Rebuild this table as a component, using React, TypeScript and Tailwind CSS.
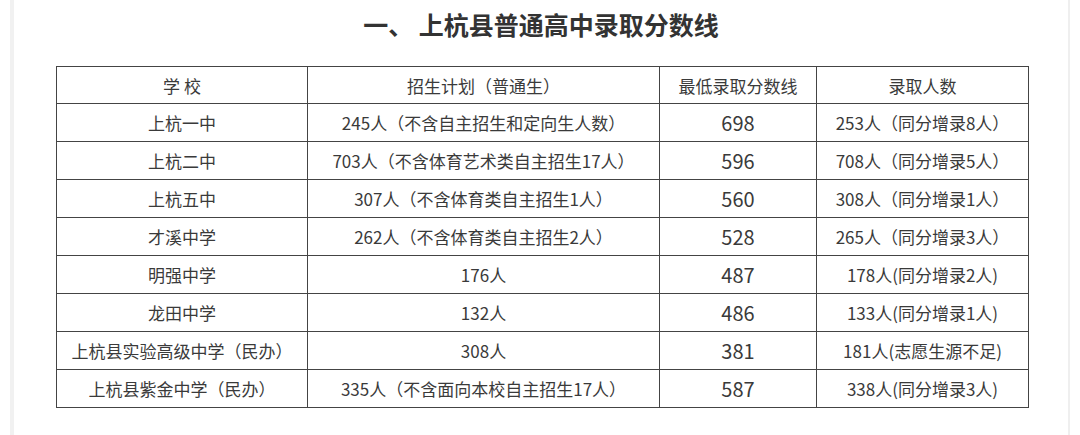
import React from "react";

const rows: [string, string, string, string][] = [
  ["上杭一中", "245人（不含自主招生和定向生人数）", "698", "253人（同分增录8人）"],
  ["上杭二中", "703人（不含体育艺术类自主招生17人）", "596", "708人（同分增录5人）"],
  ["上杭五中", "307人（不含体育类自主招生1人）", "560", "308人（同分增录1人）"],
  ["才溪中学", "262人（不含体育类自主招生2人）", "528", "265人（同分增录3人）"],
  ["明强中学", "176人", "487", "178人(同分增录2人)"],
  ["龙田中学", "132人", "486", "133人(同分增录1人)"],
  ["上杭县实验高级中学（民办）", "308人", "381", "181人(志愿生源不足)"],
  ["上杭县紫金中学（民办）", "335人（不含面向本校自主招生17人）", "587", "338人(同分增录3人)"],
];

export default function App() {
  return (
    <div
      className="w-[1080px] h-[435px] bg-white flex overflow-hidden text-[#3a3a3a]"
      style={{ fontFamily: '"Noto Sans CJK SC", "Noto Sans", sans-serif' }}
    >
      <div className="w-[10px]" />
      <div className="w-[4px] bg-[#f1f1f1]" />
      <div className="flex-1 flex flex-col">
        <div className="h-[48px] flex items-center justify-center">
          <h1 className="text-[25px] font-bold leading-none text-[#333]">一、 上杭县普通高中录取分数线</h1>
        </div>
        <div className="mt-[18px] pl-[42px]">
          <table className="table-fixed border-collapse w-[972px] text-[17px] leading-none">
            <colgroup>
              <col className="w-[251px]" />
              <col className="w-[352px]" />
              <col className="w-[157px]" />
              <col className="w-[212px]" />
            </colgroup>
            <thead>
              <tr className="h-[37px]">
                <th className="border border-[#444] font-normal text-center">学 校</th>
                <th className="border border-[#444] font-normal text-center">招生计划（普通生）</th>
                <th className="border border-[#444] font-normal text-center">最低录取分数线</th>
                <th className="border border-[#444] font-normal text-center">录取人数</th>
              </tr>
            </thead>
            <tbody>
              {rows.map((r) => (
                <tr key={r[0]} className="h-[38px]">
                  <td className="border border-[#444] text-center whitespace-nowrap">{r[0]}</td>
                  <td className="border border-[#444] text-center whitespace-nowrap">{r[1]}</td>
                  <td className="border border-[#444] text-center text-[20px]">{r[2]}</td>
                  <td className="border border-[#444] text-center whitespace-nowrap">{r[3]}</td>
                </tr>
              ))}
            </tbody>
          </table>
        </div>
      </div>
      <div className="w-[2px] bg-[#efefef]" />
      <div className="w-[10px]" />
    </div>
  );
}
